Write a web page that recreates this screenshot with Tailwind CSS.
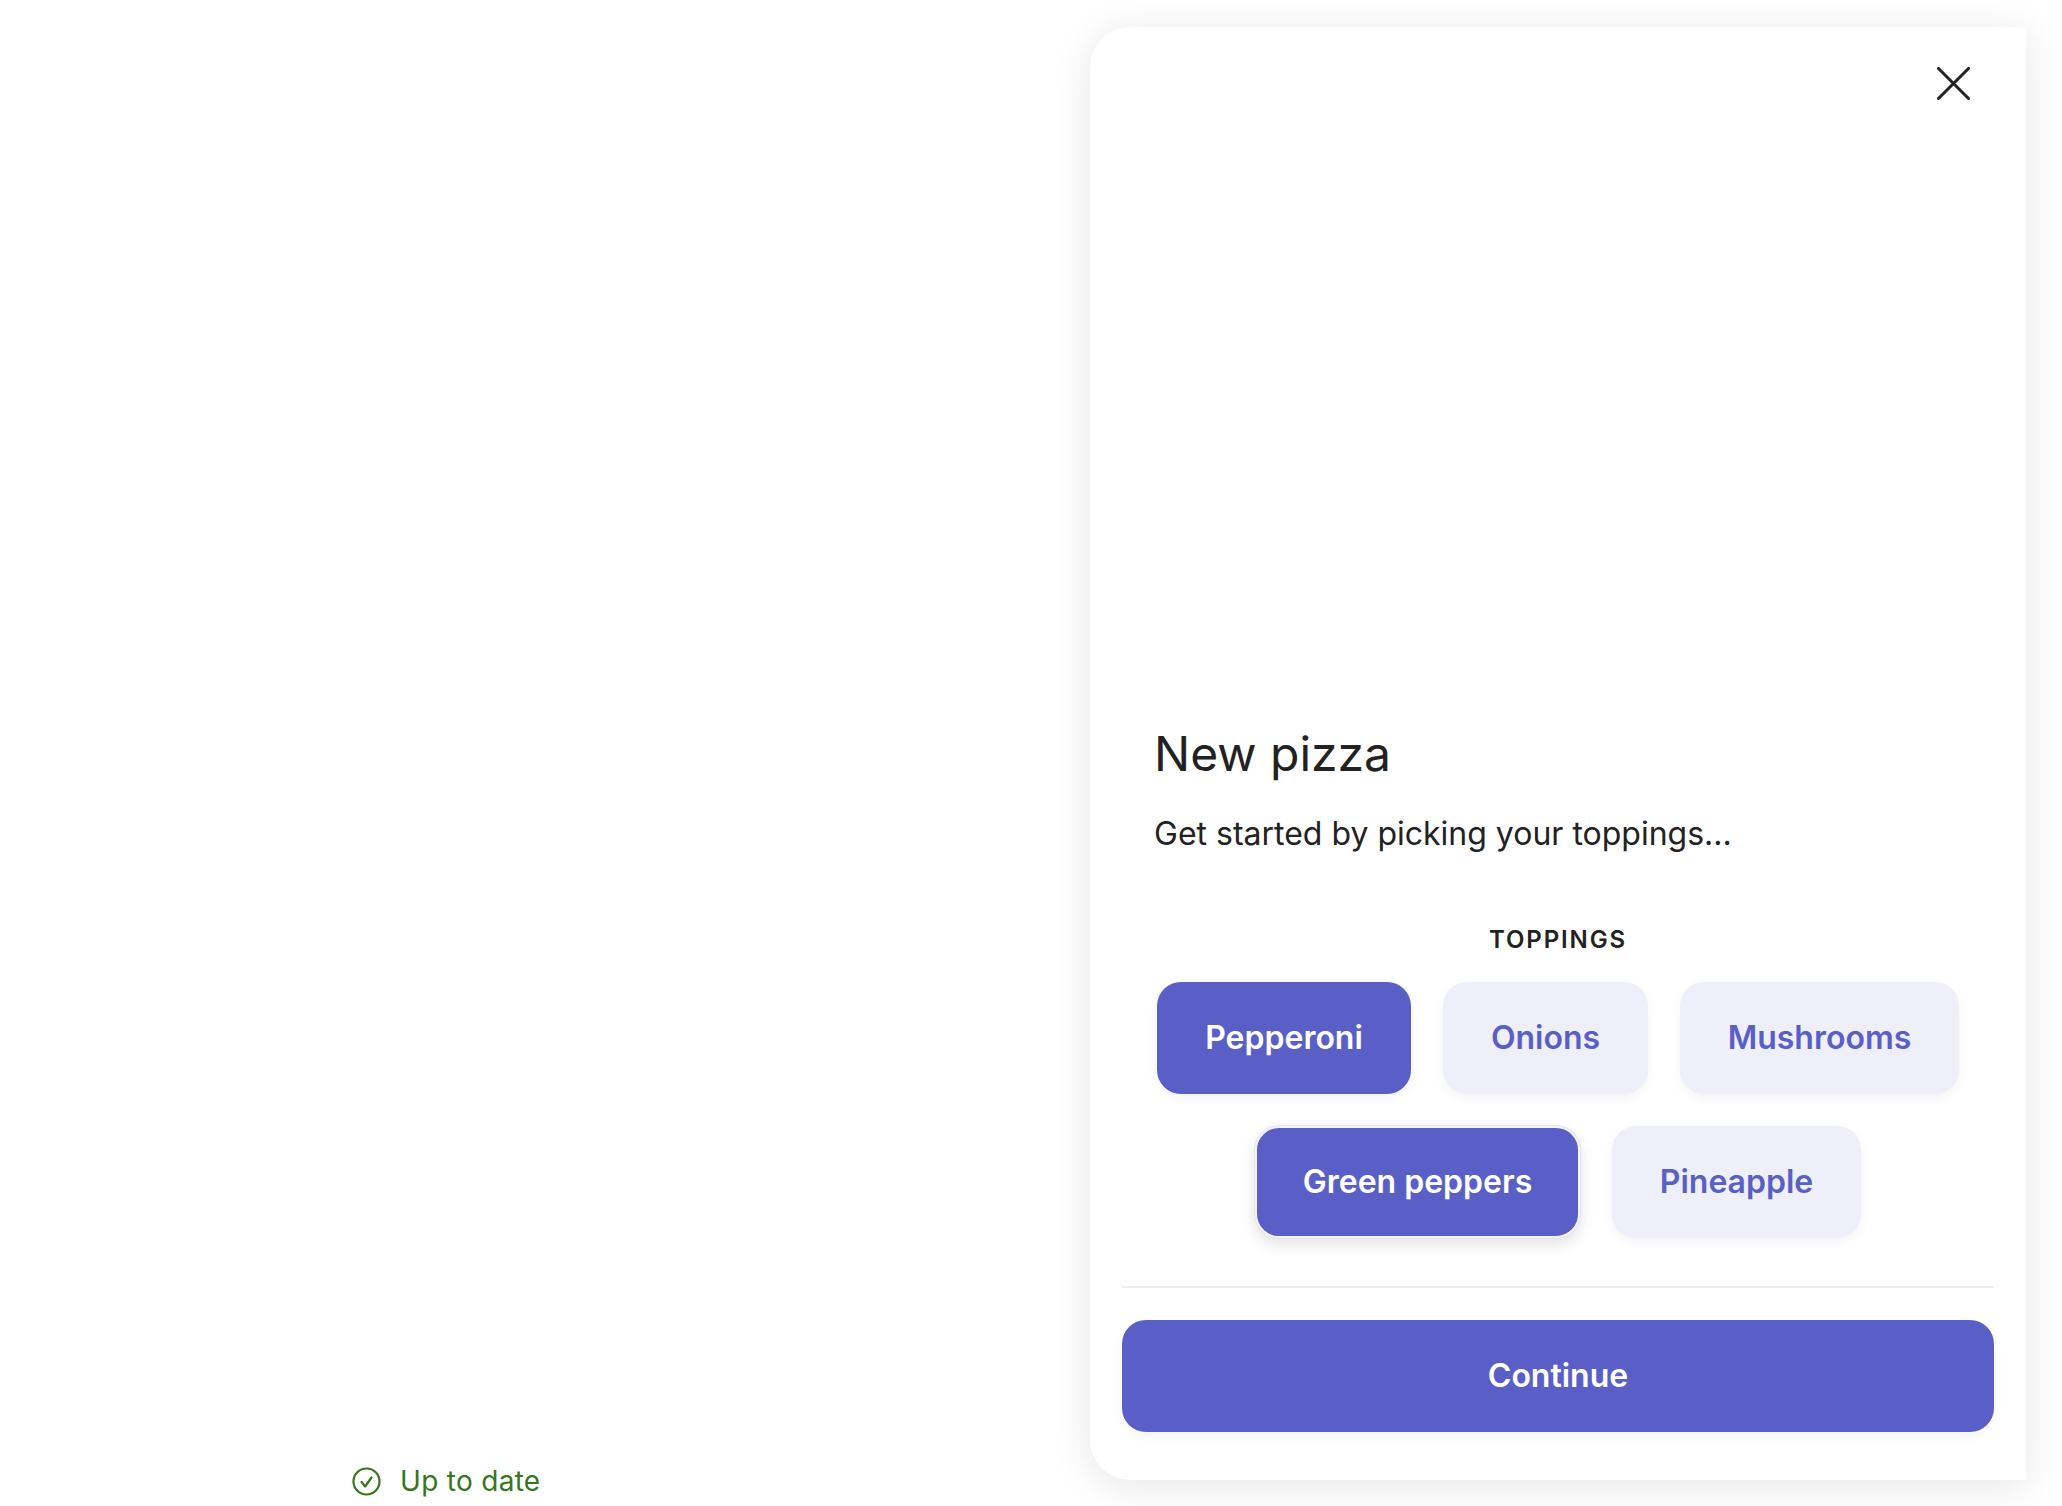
<!DOCTYPE html>
<html lang="en">
<head>
    <meta charset="UTF-8">
    <meta name="viewport" content="width=device-width, initial-scale=1.0">
    <script src="https://cdn.jsdelivr.net/npm/@tailwindcss/browser@4"></script>
    <title>New pizza</title>
</head>
<body class="bg-white font-['Inter',sans-serif] text-[#222222] overflow-hidden">
    <main class="flex h-[1506px] w-[2062px]">
        <div class="flex-1 flex flex-col justify-end pl-[352px]">
            <div class="flex items-center gap-[19px] h-[50px] text-[#37751f] text-[28px] tracking-[0.3px]">
                <svg class="w-[29px] h-[29px]" viewBox="0 0 29 29" fill="none" stroke="currentColor" stroke-width="2.2">
                    <circle cx="14.5" cy="14.5" r="13"/>
                    <path d="M9.5 15l3.7 4.5 6.3-9" stroke-linecap="round" stroke-linejoin="round"/>
                </svg>
                <span>Up to date</span>
            </div>
        </div>
        <div class="w-[936px] h-[1453px] mt-[27px] mr-[36px] rounded-l-[40px] bg-white shadow-[0_6px_40px_rgba(20,20,0,0.1)] flex flex-col pt-[40px] px-[32px] pb-[48px]">
            <div class="flex justify-end pr-[24px]">
                <svg class="w-[33px] h-[33px]" viewBox="0 0 33 33" fill="none" stroke="#222222" stroke-width="3" stroke-linecap="round">
                    <path d="M1.5 1.5l30 30M31.5 1.5l-30 30"/>
                </svg>
            </div>
            <div class="mt-auto px-[32px]">
                <h1 class="text-[48px] leading-[64px]">New pizza</h1>
                <p class="mt-[24px] text-[32px] leading-[48px]">Get started by picking your toppings...</p>
            </div>
            <div class="mt-[66px] text-center text-[24px] leading-[32px] font-semibold tracking-[1.9px]">TOPPINGS</div>
            <div class="mt-[26px] flex flex-wrap justify-center gap-[32px] text-[32px] font-semibold">
                <button class="h-[112px] w-[254px] rounded-[24px] bg-[#5a5fc7] text-white shadow-[0_4px_12px_rgba(0,0,0,0.05)]">Pepperoni</button>
                <button class="h-[112px] w-[205px] rounded-[24px] bg-[#efeffa] text-[#5a5fc7] shadow-[0_4px_12px_rgba(0,0,0,0.05)]">Onions</button>
                <button class="h-[112px] w-[279px] rounded-[24px] bg-[#efeffa] text-[#5a5fc7] shadow-[0_4px_12px_rgba(0,0,0,0.05)]">Mushrooms</button>
                <button class="h-[112px] w-[325px] rounded-[24px] bg-[#5a5fc7] text-white border-[2px] border-[#f4f4fc] shadow-[0_0_0_1px_#e4e4f6,0_6px_16px_rgba(0,0,0,0.12)]">Green peppers</button>
                <button class="h-[112px] w-[249px] rounded-[24px] bg-[#efeffa] text-[#5a5fc7] shadow-[0_4px_12px_rgba(0,0,0,0.05)]">Pineapple</button>
            </div>
            <div class="mt-[48px] h-[2px] bg-[#eeeef0]"></div>
            <button class="mt-[32px] h-[112px] rounded-[24px] bg-[#5a5fc7] text-white text-[32px] font-semibold shadow-[0_4px_12px_rgba(0,0,0,0.05)]">Continue</button>
        </div>
    </main>
</body>
</html>
